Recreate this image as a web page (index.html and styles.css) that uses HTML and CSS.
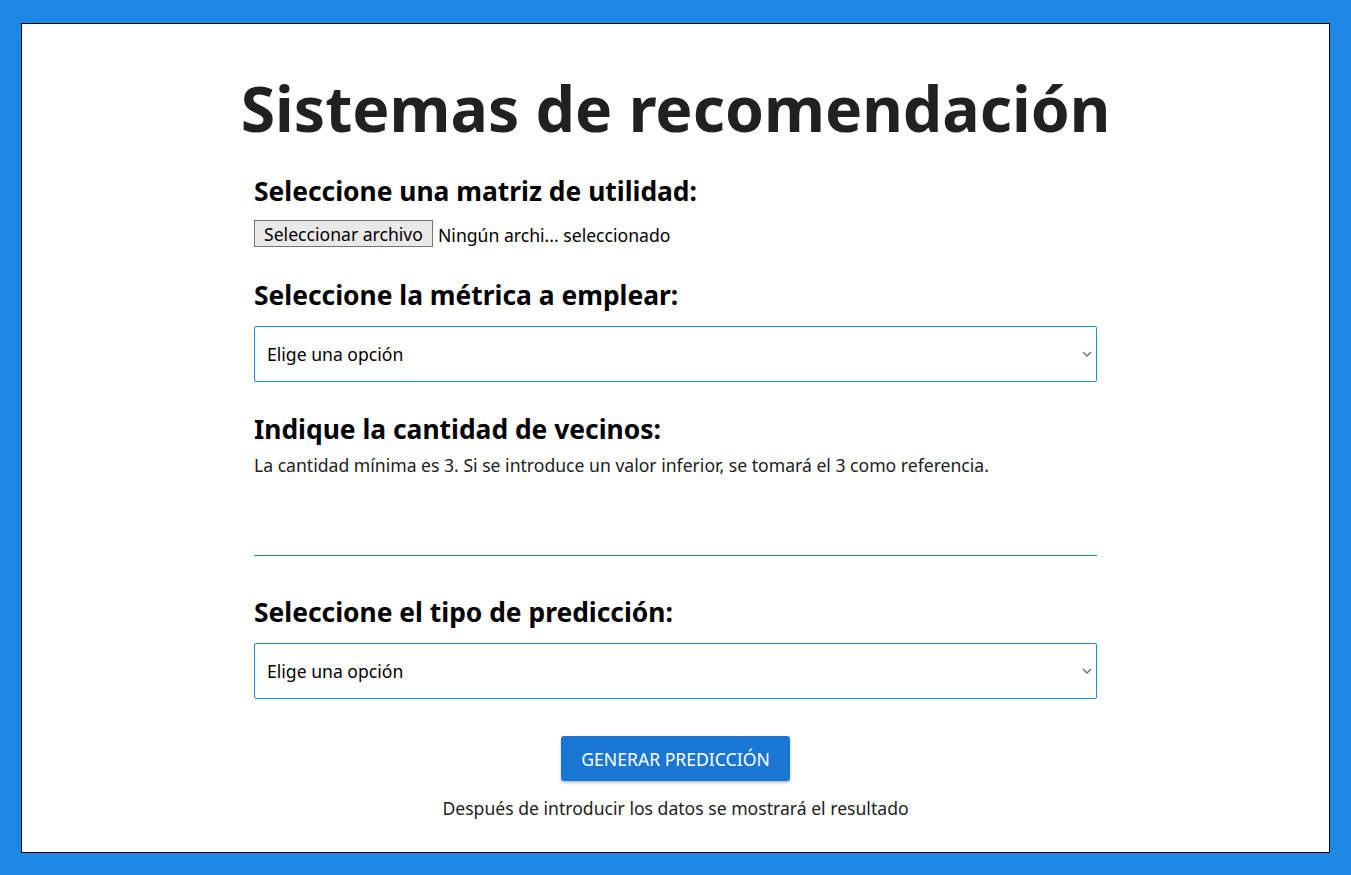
FILE: index.html
```html
<!DOCTYPE html>
<html lang="es">
<head>
<meta charset="utf-8">
<title>Sistemas de recomendación</title>
<link rel="stylesheet" href="styles.css">
</head>
<body>
<main class="frame">
  <h1 class="title">Sistemas de recomendación</h1>
  <form class="form">
    <h2 class="label">Seleccione una matriz de utilidad:</h2>
    <div class="file-row">
      <button type="button" class="file-btn">Seleccionar archivo</button>
      <span class="file-name">Ningún archi... seleccionado</span>
    </div>

    <h2 class="label gap-a">Seleccione la métrica a emplear:</h2>
    <div class="select-wrap">
      <select class="select"><option>Elige una opción</option></select>
      <svg class="chevron" width="10" height="6" viewBox="0 0 10 6"><path d="M1 1l4 4 4-4" fill="none" stroke="#6b6b6b" stroke-width="1.3"/></svg>
    </div>

    <h2 class="label gap-b">Indique la cantidad de vecinos:</h2>
    <p class="hint">La cantidad mínima es 3. Si se introduce un valor inferior, se tomará el 3 como referencia.</p>

    <hr class="rule">

    <h2 class="label gap-c">Seleccione el tipo de predicción:</h2>
    <div class="select-wrap">
      <select class="select"><option>Elige una opción</option></select>
      <svg class="chevron" width="10" height="6" viewBox="0 0 10 6"><path d="M1 1l4 4 4-4" fill="none" stroke="#6b6b6b" stroke-width="1.3"/></svg>
    </div>

    <div class="actions">
      <button type="button" class="primary">GENERAR PREDICCIÓN</button>
      <p class="result">Después de introducir los datos se mostrará el resultado</p>
    </div>
  </form>
</main>
</body>
</html>
```
FILE: styles.css
```css
html, body {
  margin: 0;
  padding: 0;
}
body {
  background: #1e88e5;
  padding: 23px 21px 22px 21px;
  box-sizing: border-box;
  height: 875px;
  font-family: "Noto Sans", "Open Sans", sans-serif;
  font-size: 17.6px;
}
.frame {
  background: #fff;
  border: 1px solid #000;
  height: 830px;
  box-sizing: border-box;
  display: flex;
  flex-direction: column;
  align-items: center;
  padding-top: 44px;
}
.title {
  margin: 0;
  font-size: 62.5px;
  line-height: 80px;
  font-weight: 700;
  color: #212121;
}
.form {
  width: 843px;
  display: flex;
  flex-direction: column;
  margin-top: 27px;
}
.label {
  margin: 0;
  font-size: 26.4px;
  line-height: 32px;
  font-weight: 700;
  color: #000;
}
.gap-a { margin-top: 32px; }
.gap-b { margin-top: 31px; }
.gap-c { margin-top: 40px; }
.file-row {
  display: flex;
  align-items: center;
  margin-top: 13px;
  height: 27px;
}
.file-btn {
  height: 27px;
  width: 179px;
  padding: 2px 0 0;
  border: 1px solid #767676;
  background: #e9e9e9;
  border-radius: 0;
  font-family: inherit;
  font-size: 17.6px;
  line-height: 23px;
  color: #000;
  white-space: nowrap;
}
.file-name {
  margin-left: 5px;
  padding-top: 3px;
  color: #000;
}
.select-wrap {
  position: relative;
  margin-top: 15px;
}
.select {
  width: 100%;
  height: 56px;
  border: 1px solid #1e88e5;
  border-radius: 2px;
  background: #fff;
  padding: 0 12px;
  font-family: inherit;
  font-size: 17.6px;
  color: #000;
  appearance: none;
  -webkit-appearance: none;
  outline: none;
  display: block;
}
.chevron {
  position: absolute;
  right: 5px;
  top: 25px;
}
.hint {
  margin: 10px 0 0;
  line-height: 20px;
  color: #212121;
}
.rule {
  margin: 80px 0 0;
  border: 0;
  border-top: 1px solid #1e88e5;
  height: 0;
}
.actions {
  display: flex;
  flex-direction: column;
  align-items: center;
  margin-top: 37px;
}
.primary {
  height: 45px;
  width: 229px;
  padding: 0;
  background: #1976d2;
  color: #fff;
  border: 0;
  border-radius: 3px;
  font-family: inherit;
  font-size: 17.6px;
  box-shadow: 0 2px 3px rgba(0,0,0,0.25);
}
.result {
  margin: 17px 0 0;
  line-height: 20px;
  color: #212121;
}
```
